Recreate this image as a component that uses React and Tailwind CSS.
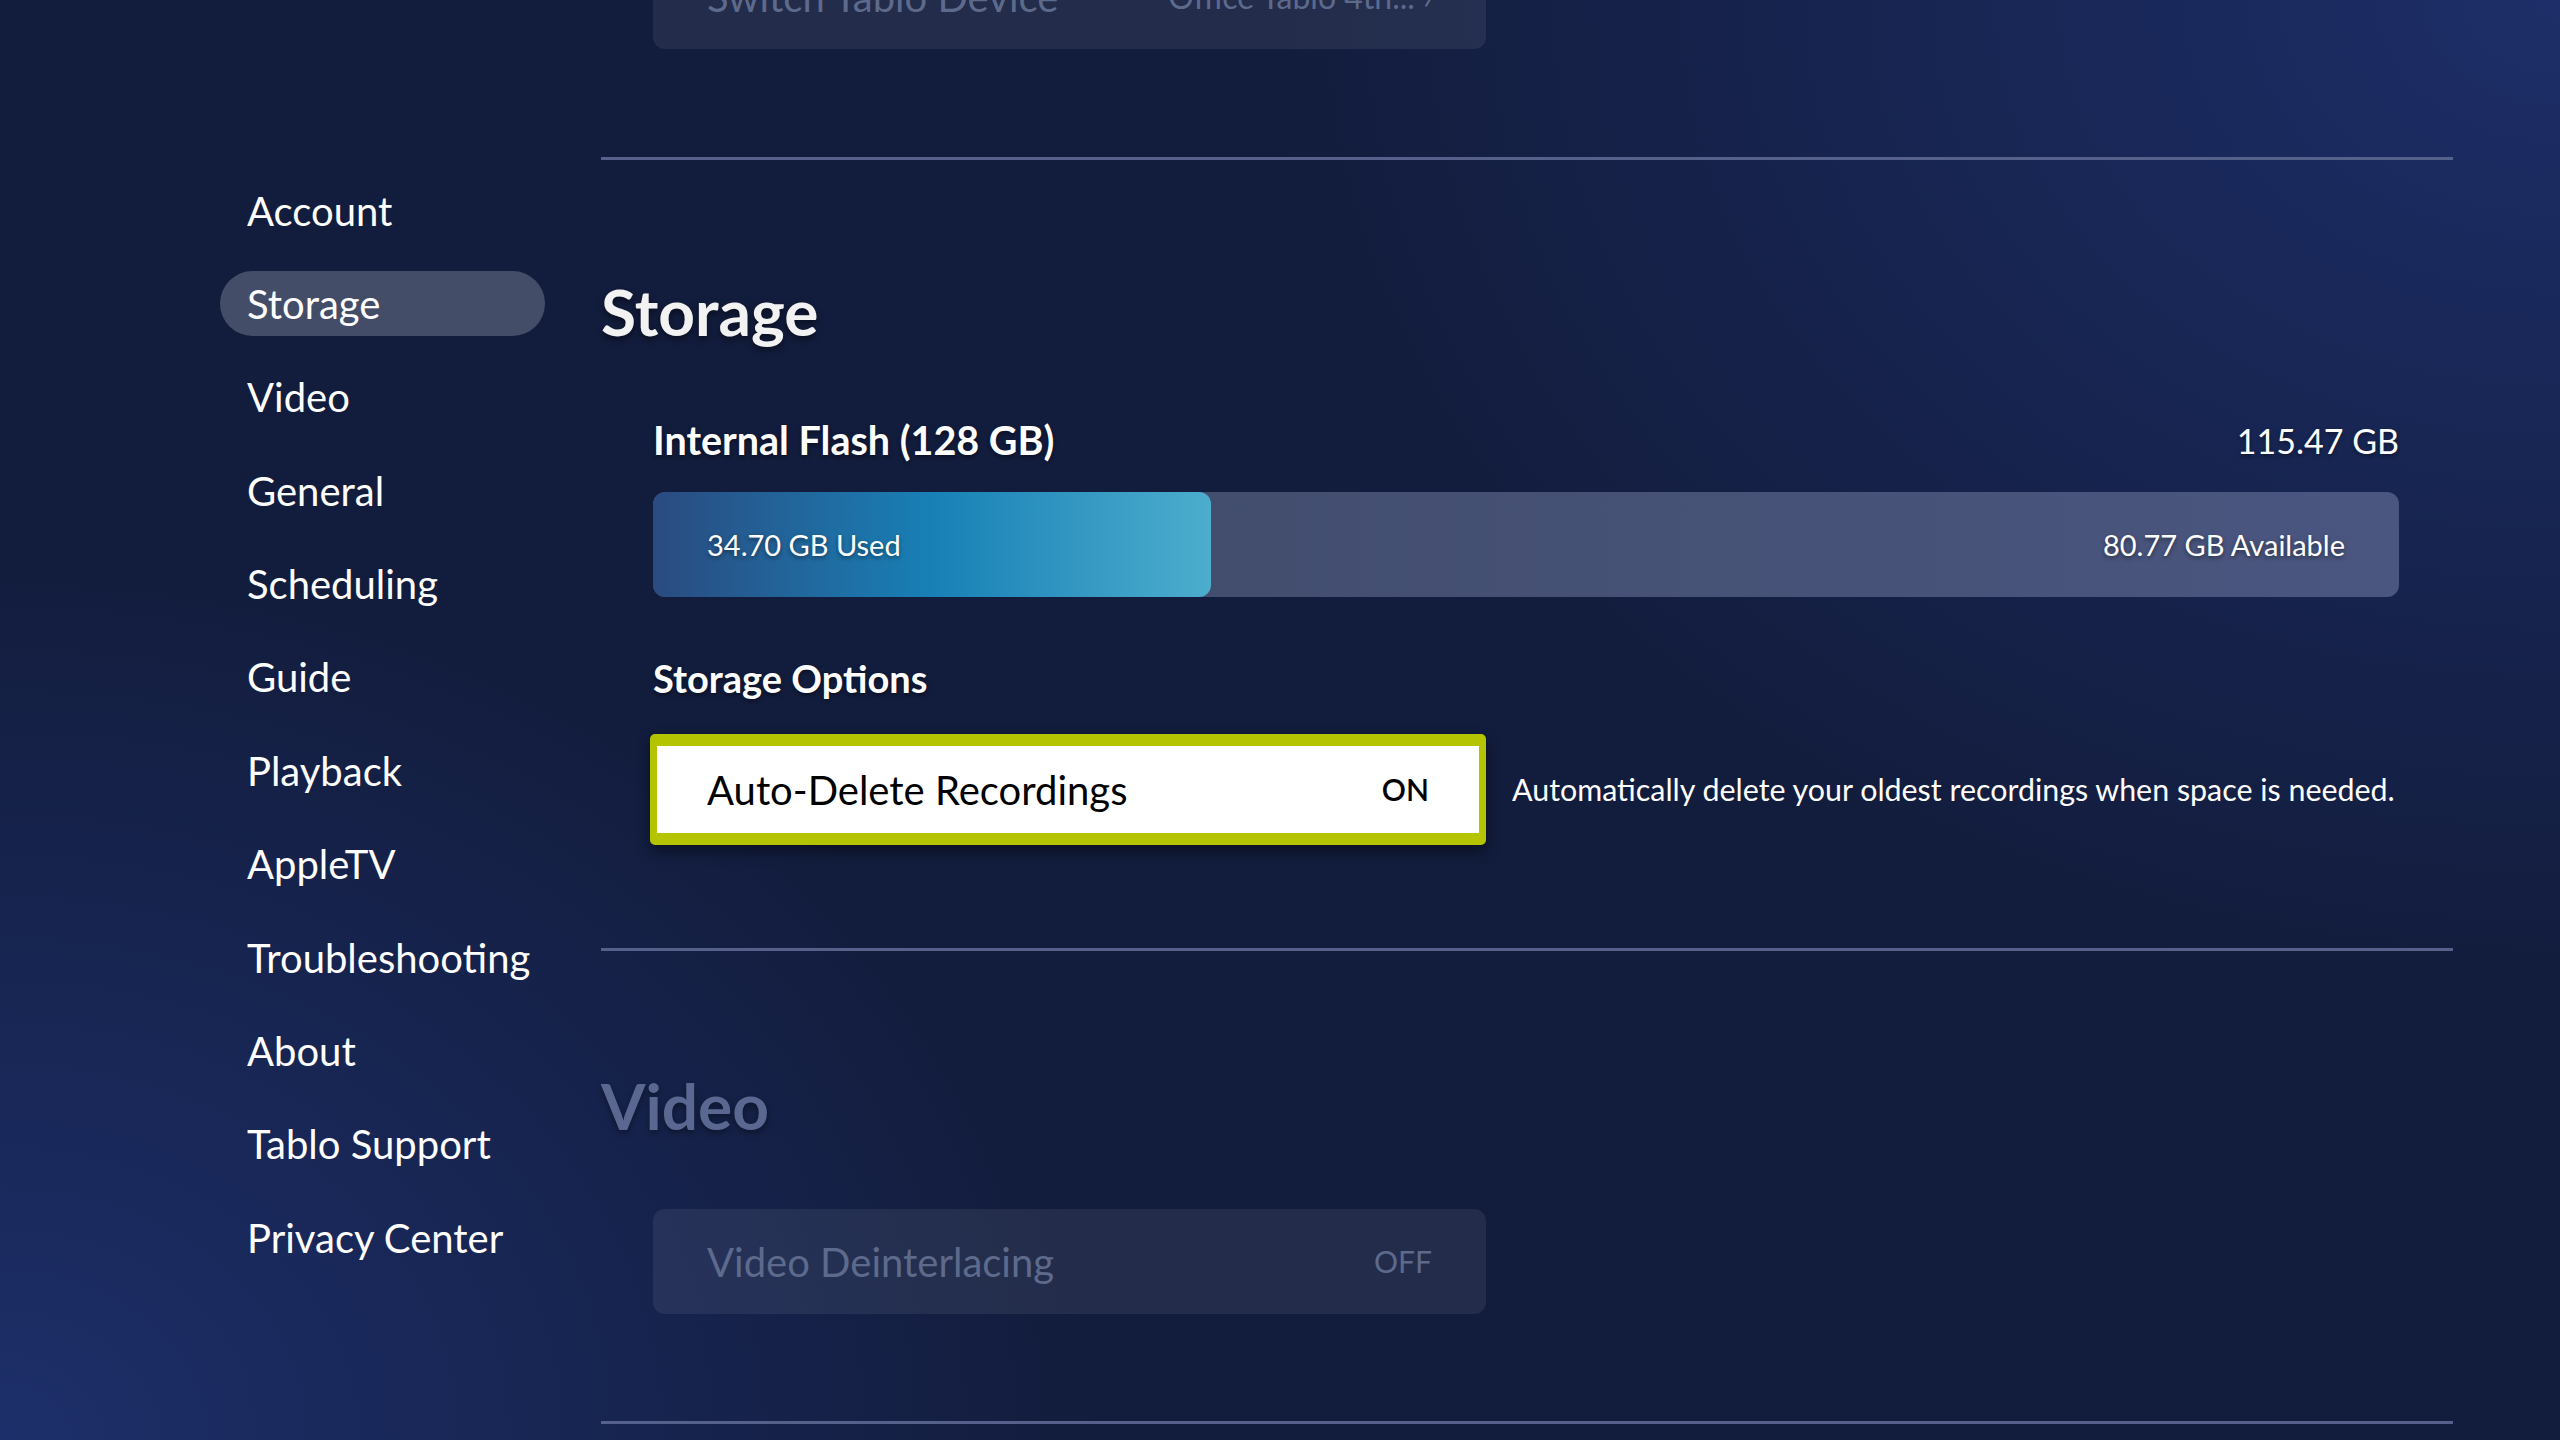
const MENU = [
  "Account",
  "Storage",
  "Video",
  "General",
  "Scheduling",
  "Guide",
  "Playback",
  "AppleTV",
  "Troubleshooting",
  "About",
  "Tablo Support",
  "Privacy Center",
];

const USED = 34.7;
const AVAILABLE = 80.77;

function Divider() {
  return <div className="h-[3px] w-full bg-[#55618a]" />;
}

function Sidebar() {
  return (
    <nav className="flex w-[325px] shrink-0 flex-col gap-[28.4px] pt-[178px]">
      {MENU.map((item) => (
        <div
          key={item}
          className={
            item === "Storage"
              ? "flex h-[65px] items-center rounded-full bg-[#434d68] pl-[27px] text-[40px] text-white"
              : "flex h-[65px] items-center pl-[27px] text-[40px] text-white"
          }
        >
          {item}
        </div>
      ))}
    </nav>
  );
}

function StorageBar() {
  const pct = (USED / (USED + AVAILABLE)) * 100 + 1.9;
  return (
    <div className="relative flex h-[105px] w-full overflow-hidden rounded-[12px] bg-[linear-gradient(90deg,#3f4a66,#4a5680)]">
      <div
        className="h-full rounded-[12px] bg-[linear-gradient(90deg,#2a4b80_0%,#1880b6_50%,#4cadcd_100%)]"
        style={{ width: `${pct}%` }}
      />
      <div className="absolute inset-0 flex items-center justify-between px-[54px] text-[29px] text-white [text-shadow:0_2px_4px_rgba(0,0,0,0.45)]">
        <span>34.70 GB Used</span>
        <span>80.77 GB Available</span>
      </div>
    </div>
  );
}

export default function App() {
  return (
    <div
      className="flex h-[1440px] w-[2560px] overflow-hidden bg-[#121c3c] bg-[radial-gradient(ellipse_1300px_1000px_at_100%_0%,#1d2e68_0%,rgba(29,46,104,0)_100%),radial-gradient(ellipse_1100px_900px_at_0%_100%,#1d2f6a_0%,rgba(29,46,104,0)_100%)] pl-[220px] text-white"
      style={{ fontFamily: "Lato, 'Open Sans', sans-serif" }}
    >
      <Sidebar />

      <main className="ml-[56px] flex w-[1852px] flex-col">
        {/* previous section, scrolled up */}
        <div className="ml-[52px] mt-[-56px] flex h-[105px] w-[833px] items-center justify-between rounded-[12px] bg-white/[0.07] px-[54px] text-[40px] text-[#5d6a8c]">
          <span>Switch Tablo Device</span>
          <span className="text-[32px]">Office Tablo 4th... &#x203A;</span>
        </div>

        <div className="mt-[108px]">
          <Divider />
        </div>

        <h1 className="mt-[114px] text-[64px] leading-[76px] font-bold text-[#f2f2f2] [text-shadow:0_3px_6px_rgba(0,0,0,0.5)]">
          Storage
        </h1>

        <div className="ml-[52px] mr-[54px] mt-[68px] flex h-[44px] items-center justify-between [text-shadow:0_2px_4px_rgba(0,0,0,0.45)]">
          <span className="text-[39.5px] font-bold">Internal Flash (128 GB)</span>
          <span className="text-[34px]">115.47 GB</span>
        </div>

        <div className="ml-[52px] mr-[54px] mt-[30px]">
          <StorageBar />
        </div>

        <div className="ml-[52px] mt-[59px] flex h-[44px] items-center text-[38px] font-bold [text-shadow:0_2px_4px_rgba(0,0,0,0.45)]">
          Storage Options
        </div>

        <div className="ml-[49px] mt-[34px] flex items-center">
          <div className="flex h-[111px] w-[836px] items-center justify-between rounded-[5px] border-x-[7px] border-y-[12px] border-[#b5c400] bg-white px-[50px] text-black shadow-[0_6px_14px_rgba(0,0,0,0.45)]">
            <span className="text-[40px]">Auto-Delete Recordings</span>
            <span className="text-[30px] font-semibold">ON</span>
          </div>
          <span className="ml-[26px] text-[30.4px] text-white">
            Automatically delete your oldest recordings when space is needed.
          </span>
        </div>

        <div className="mt-[103px]">
          <Divider />
        </div>

        <h1 className="mt-[117px] text-[64px] leading-[76px] font-bold text-[#5a6790] [text-shadow:0_3px_6px_rgba(0,0,0,0.4)]">
          Video
        </h1>

        <div className="ml-[52px] mt-[65px] flex h-[105px] w-[833px] items-center justify-between rounded-[12px] bg-white/[0.07] px-[54px] text-[#5d6a8c]">
          <span className="text-[40px]">Video Deinterlacing</span>
          <span className="text-[30px]">OFF</span>
        </div>

        <div className="mt-[107px]">
          <Divider />
        </div>
      </main>
    </div>
  );
}
